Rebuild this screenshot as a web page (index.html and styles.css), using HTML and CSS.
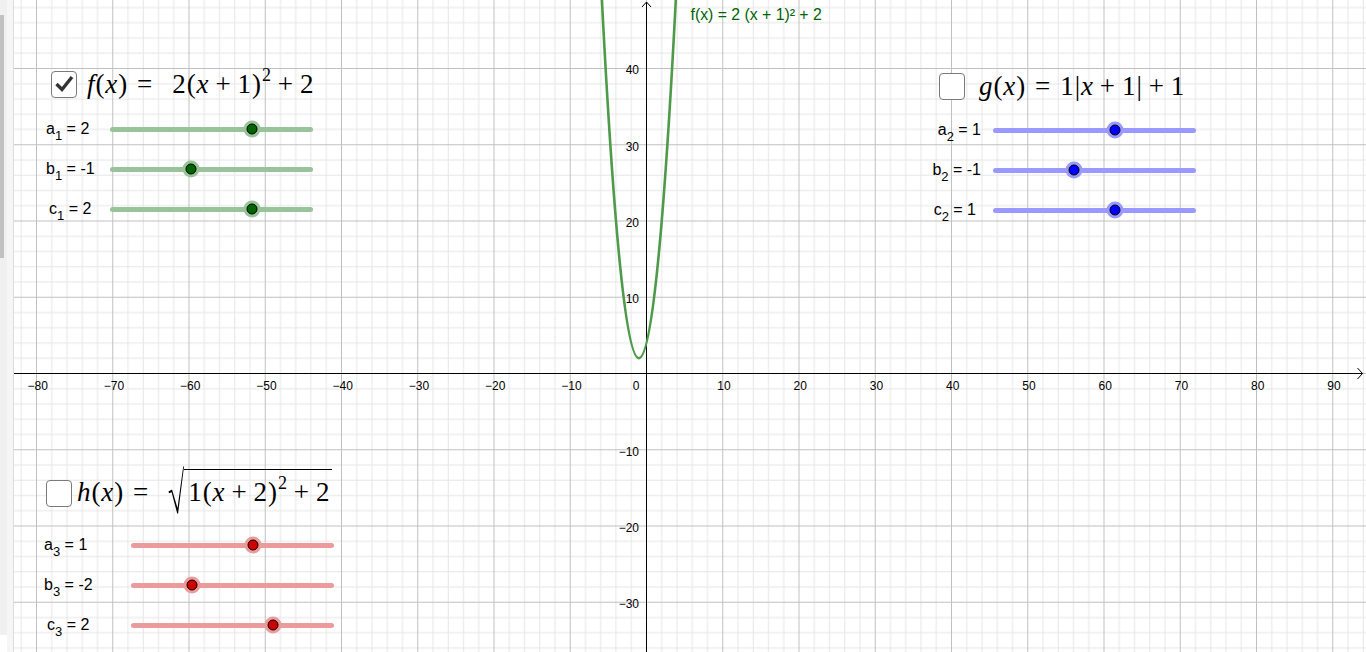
FILE: index.html
```html
<!DOCTYPE html>
<html>
<head>
<meta charset="utf-8">
<link rel="stylesheet" href="styles.css">
</head>
<body>
<div class="sidebar">
  <div class="scroll"><div class="thumb"></div></div>
  <div class="gutter"></div>
</div>
<div class="canvas">
  <svg class="board" width="1352" height="652" viewBox="0 0 1352 652">
    <defs>
      <pattern id="grid" x="632" y="373" width="76.25" height="76.25" patternUnits="userSpaceOnUse">
        <path d="M15.75 0V76.25M31 0V76.25M46.25 0V76.25M61.5 0V76.25M0 15.75H76.25M0 31H76.25M0 46.25H76.25M0 61.5H76.25" stroke="#e6e6e6" stroke-width="1" fill="none"/>
        <path d="M0.5 0V76.25M0 0.5H76.25" stroke="#c0c0c0" stroke-width="1" fill="none"/>
      </pattern>
    </defs>
    <rect width="1352" height="652" fill="url(#grid)"/>
    <path d="M0 373.5H1348.5M632.5 652V2" stroke="#000" stroke-width="1" fill="none"/>
    <path d="M1343.5 368L1348.5 373.5L1343.5 379M628 7L632.5 2L637 7" stroke="#000" stroke-width="1" fill="none"/>
    <g class="ticks">
      <text x="23.8" y="390">−80</text>
      <text x="100" y="390">−70</text>
      <text x="176.3" y="390">−60</text>
      <text x="252.5" y="390">−50</text>
      <text x="328.8" y="390">−40</text>
      <text x="405" y="390">−30</text>
      <text x="481.3" y="390">−20</text>
      <text x="557.5" y="390">−10</text>
      <text x="710" y="390">10</text>
      <text x="786.3" y="390">20</text>
      <text x="862.5" y="390">30</text>
      <text x="938.8" y="390">40</text>
      <text x="1015" y="390">50</text>
      <text x="1091.3" y="390">60</text>
      <text x="1167.5" y="390">70</text>
      <text x="1243.8" y="390">80</text>
      <text x="1320" y="390">90</text>
    </g>
    <g class="ticks yt">
      <text x="625.5" y="390">0</text>
      <text x="625" y="74.3">40</text>
      <text x="625" y="150.5">30</text>
      <text x="625" y="226.8">20</text>
      <text x="625" y="303">10</text>
      <text x="625" y="455.5">−10</text>
      <text x="625" y="531.8">−20</text>
      <text x="625" y="608">−30</text>
    </g>
    <path d="M587.5 -7.9Q624.9 724.4 662.2 -7.9" stroke="#4e9a4a" stroke-width="2.6" fill="none"/>
    <text class="curve-label" x="676.5" y="19.5">f(x) = 2 (x + 1)² + 2</text>
  </svg>

  <div class="panel green p-f">
    <div class="head">
      <div class="cb"><svg width="22" height="22" viewBox="0 0 22 22"><path d="M3.5 11L9 16.5L19 4" stroke="#333" stroke-width="3.4" fill="none"/></svg></div>
      <div class="formula"><i>f</i>(<i>x</i>)<span class="rel">=</span><span class="gap"></span>2(<i>x</i><span class="bin">+</span>1)<sup>2</sup><span class="bin">+</span>2</div>
    </div>
    <div class="row"><span class="lbl">a<sub>1</sub> = 2</span><div class="track"><span class="knob" style="left:70%"></span></div></div>
    <div class="row"><span class="lbl">b<sub>1</sub> = -1</span><div class="track"><span class="knob" style="left:40%"></span></div></div>
    <div class="row"><span class="lbl lc">c<sub>1</sub> = 2</span><div class="track"><span class="knob" style="left:70%"></span></div></div>
  </div>

  <div class="panel blue p-g">
    <div class="head">
      <div class="cb"></div>
      <div class="formula"><i>g</i>(<i>x</i>)<span class="rel">=</span>1|<i>x</i><span class="bin">+</span>1|<span class="bin">+</span>1</div>
    </div>
    <div class="row"><span class="lbl">a<sub>2</sub> = 1</span><div class="track"><span class="knob" style="left:60%"></span></div></div>
    <div class="row"><span class="lbl">b<sub>2</sub> = -1</span><div class="track"><span class="knob" style="left:40%"></span></div></div>
    <div class="row"><span class="lbl lc">c<sub>2</sub> = 1</span><div class="track"><span class="knob" style="left:60%"></span></div></div>
  </div>

  <div class="panel red p-h">
    <div class="head">
      <div class="cb"></div>
      <div class="formula"><i>h</i>(<i>x</i>)<span class="rel">=</span><span class="gap"></span><span class="sqrt"><svg class="surd" width="16" height="48" viewBox="0 0 16 48"><path d="M0.5 25.5L4 23.5L9.5 42L15.2 0.6H16L10.1 47.5H9.2L3.6 26.3L1 27.2Z" fill="#000"/></svg><span class="radicand">1(<i>x</i><span class="bin">+</span>2)<sup>2</sup><span class="bin">+</span>2</span></span></div>
    </div>
    <div class="row"><span class="lbl">a<sub>3</sub> = 1</span><div class="track"><span class="knob" style="left:60%"></span></div></div>
    <div class="row"><span class="lbl">b<sub>3</sub> = -2</span><div class="track"><span class="knob" style="left:30%"></span></div></div>
    <div class="row"><span class="lbl lc">c<sub>3</sub> = 2</span><div class="track"><span class="knob" style="left:70%"></span></div></div>
  </div>
</div>
</body>
</html>
```

FILE: styles.css
```css
* { box-sizing: border-box; }
html, body { margin: 0; padding: 0; }
body {
  width: 1366px;
  height: 652px;
  overflow: hidden;
  display: flex;
  background: #fff;
  font-family: "Liberation Sans", Arial, sans-serif;
  color: #000;
}
.sidebar { width: 14px; height: 652px; display: flex; flex: none; }
.scroll { width: 7px; height: 635px; background: #f0f0f0; padding-top: 15px; }
.thumb { width: 4px; height: 243px; background: #c1c1c1; }
.gutter { width: 7px; height: 652px; background: #f6f6f6; border-right: 1px solid #dcdcdc; }

.canvas { position: relative; width: 1352px; height: 652px; overflow: hidden; flex: none; }
.board { display: block; }
.ticks text { font-family: "Liberation Sans", Arial, sans-serif; font-size: 12px; fill: #000; text-anchor: middle; }
.ticks.yt text { text-anchor: end; }
.curve-label { font-family: "Liberation Sans", Arial, sans-serif; font-size: 15.8px; fill: #006400; }

.panel { position: absolute; display: flex; flex-direction: column; }
.p-f { left: 32px; top: 66px; }
.p-g { left: 906px; top: 68px; }
.p-h { left: 29px; top: 462px; }

.green { --track: #99c399; --knob: #006400; }
.blue { --track: #9999ff; --knob: #0000ff; }
.red { --track: #eb9b9b; --knob: #d00000; }

.head { display: flex; align-items: center; height: 36px; }
.p-f .head { padding-left: 5px; margin-bottom: 7px; }
.p-g .head { padding-left: 19px; height: 37px; margin-bottom: 5px; }
.p-h .head { padding-left: 3px; height: 62px; margin-bottom: 1px; }

.cb {
  width: 26px; height: 27px; flex: none;
  border: 1.5px solid #7a7a7a; border-radius: 4px; background: #fff;
  display: flex; align-items: center; justify-content: center;
}
.formula {
  font-family: "Liberation Serif", "Times New Roman", serif;
  font-size: 27px;
  letter-spacing: 0.9px;
  white-space: nowrap;
  line-height: 1;
}
.p-f .formula { margin-left: 10px; }
.p-g .formula { margin-left: 14px; }
.p-h .formula { margin-left: 5px; margin-bottom: 6px; }
.formula i { font-style: italic; }
.formula sup { font-size: 18px; vertical-align: 12px; line-height: 0; }
.rel { margin: 0 9px; }
.bin { margin: 0 6px; }
.gap { display: inline-block; width: 10px; }
.sqrt { display: inline-block; white-space: nowrap; }
.surd { vertical-align: -13px; }
.radicand { display: inline-block; border-top: 1.3px solid #000; padding: 9px 2px 0 4px; }

.row { display: flex; align-items: center; height: 40px; }
.lbl { font-size: 16px; line-height: 16px; flex: none; white-space: nowrap; }
.lbl sub { font-size: 13px; vertical-align: -6px; line-height: 0; }
.p-f .lbl { width: 64px; }
.p-f .lc { padding-left: 3px; }
.p-g .lbl { width: 73px; text-align: right; padding-right: 12px; }
.p-g .lc { padding-right: 17px; }
.p-h .lbl { width: 88px; padding-left: 1px; }
.p-h .lc { padding-left: 4px; }

.track { position: relative; width: 203px; height: 5px; border-radius: 3px; background: var(--track); flex: none; }
.knob {
  position: absolute; top: 50%;
  width: 11px; height: 11px; border-radius: 50%;
  background: var(--knob); border: 1px solid #000;
  box-shadow: 0 0 0 3px var(--track);
  transform: translate(-50%, -50%);
}
```
